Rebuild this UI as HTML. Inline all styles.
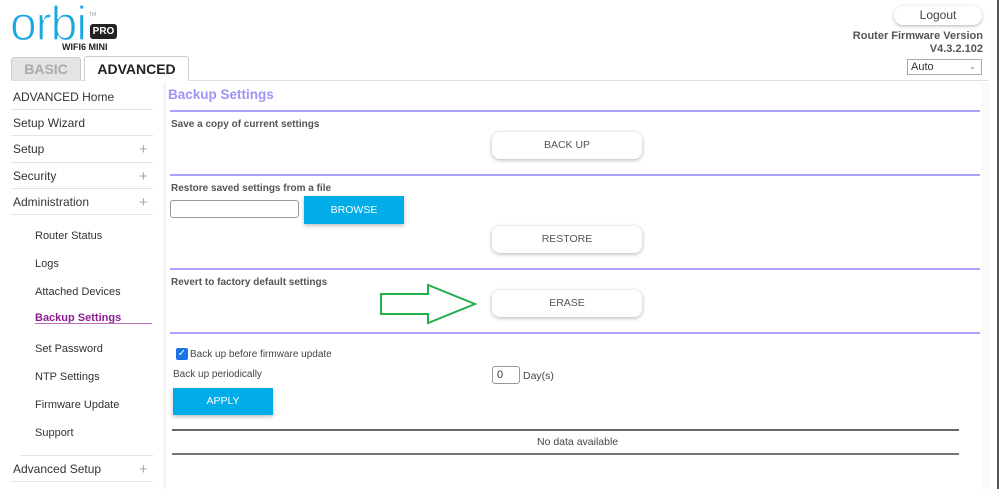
<!DOCTYPE html>
<html><head><meta charset="utf-8"><style>
*{margin:0;padding:0;box-sizing:border-box}
body{width:999px;height:489px;background:#fff;font-family:"Liberation Sans",sans-serif;position:relative;overflow:hidden;color:#333}
.a{position:absolute}
.nav{font-size:12px;color:#333}
.sep{position:absolute;left:11px;width:142px;height:1px;background:#e2e2e2}
.plus{position:absolute;left:139px;font-size:15px;color:#aaa;font-weight:300}
.sub{position:absolute;left:35px;font-size:11px;color:#333}
.pl{position:absolute;left:170px;width:810px;height:2px;background:#a9a3fc}
.lbl{position:absolute;left:171px;font-size:10px;font-weight:bold;color:#555}
.wb{position:absolute;left:492px;width:150px;height:27px;background:#fff;border-radius:8px;box-shadow:0 1px 4px rgba(0,0,0,.3);font-size:10.5px;color:#555;text-align:center;line-height:27px}
.bb{position:absolute;background:#00ade8;color:#fff;font-size:10.5px;text-align:center;box-shadow:0 2px 4px rgba(0,0,0,.25)}
</style></head><body>
<svg class="a" style="left:8px;top:0" width="100" height="48"><text x="2" y="40" font-family="Liberation Sans" font-size="48" fill="#1ba7e1" stroke="#fff" stroke-width="1.2" letter-spacing="-1">orbi</text></svg>
<div class="a" style="left:89px;top:12px;font-size:5px;color:#999">TM</div>
<div class="a" style="left:90px;top:24px;width:27px;height:15px;background:#222;border-radius:3px;color:#fff;font-size:10px;font-weight:bold;text-align:center;line-height:15px">PRO</div>
<div class="a" style="left:62px;top:42px;font-size:9px;font-weight:bold;color:#222">WIFI6 MINI</div>
<div class="a" style="left:11px;top:57px;width:70px;height:23px;background:#e4e4e4;border:1px solid #ccc;border-bottom:none;border-radius:3px 3px 0 0;font-size:14px;font-weight:bold;color:#aaa;text-align:center;line-height:23px">BASIC</div>
<div class="a" style="left:84px;top:56px;width:105px;height:25px;background:#fff;border:1px solid #ccc;border-bottom:none;border-radius:3px 3px 0 0;font-size:14px;font-weight:bold;color:#222;text-align:center;line-height:24px">ADVANCED</div>
<div class="a" style="left:189px;top:80px;width:800px;height:1px;background:#e0e0e0"></div>
<div class="a" style="left:11px;top:80px;width:73px;height:1px;background:#e0e0e0"></div>
<div class="a" style="left:894px;top:6px;width:88px;height:19px;border-radius:9px;box-shadow:0 1px 3px rgba(0,0,0,.3);font-size:12px;color:#444;text-align:center;line-height:19px">Logout</div>
<div class="a" style="right:16px;top:30px;font-size:11px;font-weight:bold;color:#555;text-align:right;line-height:13px">Router Firmware Version<br>V4.3.2.102</div>
<div class="a" style="left:907px;top:59px;width:75px;height:16px;border:1px solid #aaa;font-size:11px;color:#333;padding-left:3px;line-height:14px">Auto<span style="position:absolute;right:5px;font-size:8px;color:#777">&#8964;</span></div>
<div class="a" style="left:997px;top:0;width:2px;height:489px;background:#555"></div>
<div class="a" style="left:163px;top:83px;width:3px;height:406px;background:#f4f4f4"></div>
<div class="a" style="left:981px;top:83px;width:8px;height:406px;background:#fafafa"></div>

<div class="a nav" style="left:13px;top:90px">ADVANCED Home</div>
<div class="sep" style="top:109px"></div>
<div class="a nav" style="left:13px;top:116px">Setup Wizard</div>
<div class="sep" style="top:135px"></div>
<div class="a nav" style="left:13px;top:142px">Setup</div><div class="plus" style="top:141px">+</div>
<div class="sep" style="top:162px"></div>
<div class="a nav" style="left:13px;top:169px">Security</div><div class="plus" style="top:168px">+</div>
<div class="sep" style="top:188px"></div>
<div class="a nav" style="left:13px;top:195px">Administration</div><div class="plus" style="top:194px">+</div>
<div class="sep" style="top:214px"></div>
<div class="sub" style="top:230px">Router Status</div>
<div class="sub" style="top:258px">Logs</div>
<div class="sub" style="top:286px">Attached Devices</div>
<div class="sub" style="top:312px;color:#8e1e8f;font-weight:bold">Backup Settings</div>
<div class="a" style="left:35px;top:323px;width:117px;height:1px;background:#c070c0"></div>
<div class="sub" style="top:343px">Set Password</div>
<div class="sub" style="top:371px">NTP Settings</div>
<div class="sub" style="top:399px">Firmware Update</div>
<div class="sub" style="top:427px">Support</div>
<div class="sep" style="left:20px;width:133px;top:455px"></div>
<div class="a nav" style="left:13px;top:462px">Advanced Setup</div><div class="plus" style="top:461px">+</div>
<div class="sep" style="top:481px"></div>

<div class="a" style="left:168px;top:87px;font-size:13.5px;font-weight:bold;color:#9d94f8">Backup Settings</div>
<div class="pl" style="top:110px"></div>
<div class="lbl" style="top:119px">Save a copy of current settings</div>
<div class="wb" style="top:132px">BACK UP</div>
<div class="pl" style="top:174px"></div>
<div class="lbl" style="top:183px">Restore saved settings from a file</div>
<div class="a" style="left:170px;top:200px;width:129px;height:18px;border:1px solid #999;border-radius:3px"></div>
<div class="bb" style="left:304px;top:196px;width:100px;height:28px;line-height:28px">BROWSE</div>
<div class="wb" style="top:226px">RESTORE</div>
<div class="pl" style="top:268px"></div>
<div class="lbl" style="top:277px">Revert to factory default settings</div>
<svg class="a" style="left:370px;top:280px" width="120" height="50"><path d="M11 14 H58 V5 L105 24 L58 43 V34 H11 Z" fill="none" stroke="#22b04a" stroke-width="2"/></svg>
<div class="wb" style="top:290px">ERASE</div>
<div class="pl" style="top:332px"></div>
<div class="a" style="left:176px;top:348px;width:12px;height:12px;background:#1a73e8;border-radius:2px;color:#fff;font-size:10px;line-height:12px;text-align:center">✓</div>
<div class="a" style="left:190px;top:349px;font-size:10px;color:#444">Back up before firmware update</div>
<div class="a" style="left:173px;top:369px;font-size:10px;color:#444">Back up periodically</div>
<div class="a" style="left:492px;top:366px;width:28px;height:18px;border:1px solid #999;border-radius:3px;font-size:11px;color:#333;padding-left:4px;line-height:16px">0</div>
<div class="a" style="left:523px;top:370px;font-size:10.5px;color:#444">Day(s)</div>
<div class="bb" style="left:173px;top:388px;width:100px;height:27px;line-height:27px">APPLY</div>
<div class="a" style="left:172px;top:429px;width:787px;height:2px;background:#666"></div>
<div class="a" style="left:537px;top:436px;font-size:10.5px;color:#444">No data available</div>
<div class="a" style="left:172px;top:453px;width:787px;height:2px;background:#777"></div>
</body></html>
